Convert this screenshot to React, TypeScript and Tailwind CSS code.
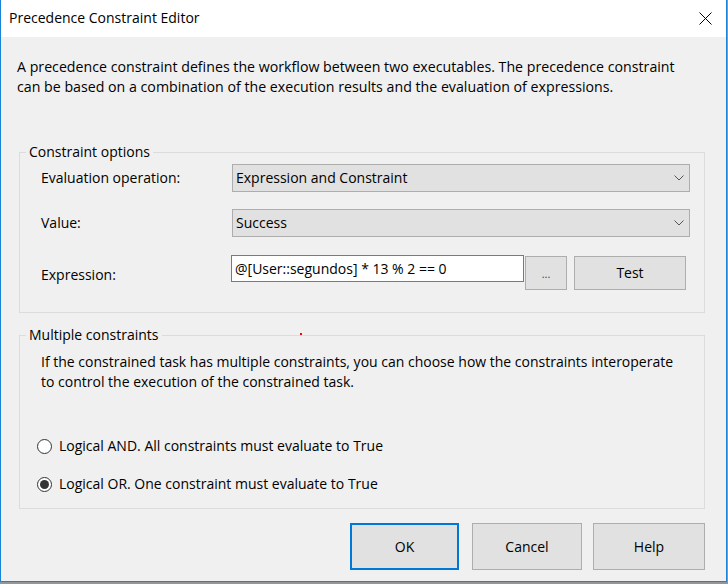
const base = "font-['Open_Sans',sans-serif] text-[14px] leading-[20px] text-black";

function Chevron() {
  return (
    <svg width="10" height="6" viewBox="0 0 10 6" className="text-[#555]">
      <path d="M0.5 0.5 L5 5 L9.5 0.5" fill="none" stroke="currentColor" strokeWidth="1" />
    </svg>
  );
}

function Select({ value }: { value: string }) {
  return (
    <div className="flex h-[28px] w-[458px] items-center justify-between border border-[#adadad] bg-[#e1e1e1] pl-[3px] pr-[5px]">
      <span>{value}</span>
      <Chevron />
    </div>
  );
}

function Radio({ checked, label }: { checked?: boolean; label: string }) {
  return (
    <label className="flex h-[20px] items-center">
      <span className="ml-[17px] flex h-[15px] w-[15px] items-center justify-center rounded-full border border-[#333] bg-white">
        {checked && <span className="h-[9px] w-[9px] rounded-full bg-[#333]" />}
      </span>
      <span className="ml-[7px]">{label}</span>
    </label>
  );
}

export default function App() {
  return (
    <div className={`relative h-[584px] w-[728px] bg-[#8f969e] ${base}`}>
      <div className="flex h-[582px] w-[727px] flex-col border-x border-b border-[#1883d7] bg-[#f0f0f0]">
        {/* title bar */}
        <div className="flex h-[37px] shrink-0 items-center justify-between bg-white pl-[8px] pr-[14px]">
          <span className="-mt-[1px]">Precedence Constraint Editor</span>
          <svg width="13" height="13" viewBox="0 0 13 13">
            <path d="M0.5 0.5 L12.5 12.5 M12.5 0.5 L0.5 12.5" stroke="#000" strokeWidth="1" />
          </svg>
        </div>

        <div className="flex flex-col pl-[18px] pr-[21px]">
          <p className="ml-[-2px] mt-[20px] text-[14.2px]">
            A precedence constraint defines the workflow between two executables. The precedence constraint
            <br />
            can be based on a combination of the execution results and the evaluation of expressions.
          </p>

          {/* constraint options */}
          <fieldset className="mt-[45px] w-[686px] border border-[#dcdcdc]">
            <legend className="ml-[6px] px-[3px]">Constraint options</legend>
            <div className="flex flex-col pb-[22px] pl-[21px]">
              <div className="mt-[2px] flex items-center">
                <span className="w-[191px]">Evaluation operation:</span>
                <Select value="Expression and Constraint" />
              </div>
              <div className="mt-[17px] flex items-center">
                <span className="w-[191px]">Value:</span>
                <Select value="Success" />
              </div>
              <div className="mt-[18px] flex items-start">
                <span className="mt-[10px] w-[190px]">Expression:</span>
                <div className="flex h-[27px] w-[293px] items-center border border-[#7a7a7a] bg-white pl-[3px]">
                  @[User::segundos] * 13 % 2 == 0
                </div>
                <button className="ml-[1px] mt-[1px] flex h-[34px] w-[42px] items-center justify-center border border-[#adadad] bg-[#e1e1e1] text-[11px] leading-none text-[#444]">
                  ...
                </button>
                <button className="ml-[7px] mt-[1px] h-[34px] w-[112px] border border-[#adadad] bg-[#e1e1e1]">
                  Test
                </button>
              </div>
            </div>
          </fieldset>

          {/* multiple constraints */}
          <fieldset className="mt-[12px] w-[686px] border border-[#dcdcdc] pb-[14px]">
            <legend className="ml-[6px] px-[3px]">Multiple constraints</legend>
            <p className="ml-[21px] mt-[7px]">
              If the constrained task has multiple constraints, you can choose how the constraints interoperate
              <br />
              to control the execution of the constrained task.
            </p>
            <div className="mt-[44px]">
              <Radio label="Logical AND. All constraints must evaluate to True" />
            </div>
            <div className="mt-[18px]">
              <Radio checked label="Logical OR. One constraint must evaluate to True" />
            </div>
          </fieldset>

          <div className="mt-[14px] flex w-[686px] justify-end">
            <button className="h-[47px] w-[109px] border-2 border-[#0078d7] bg-[#e1e1e1]">OK</button>
            <button className="ml-[13px] h-[47px] w-[110px] border border-[#adadad] bg-[#e1e1e1]">Cancel</button>
            <button className="ml-[11px] h-[47px] w-[112px] border border-[#adadad] bg-[#e1e1e1]">Help</button>
          </div>
        </div>
      </div>
      {/* stray red pixel from the capture */}
      <span className="absolute left-[300px] top-[333px] h-[2px] w-[2px] bg-[#f00]" />
    </div>
  );
}
